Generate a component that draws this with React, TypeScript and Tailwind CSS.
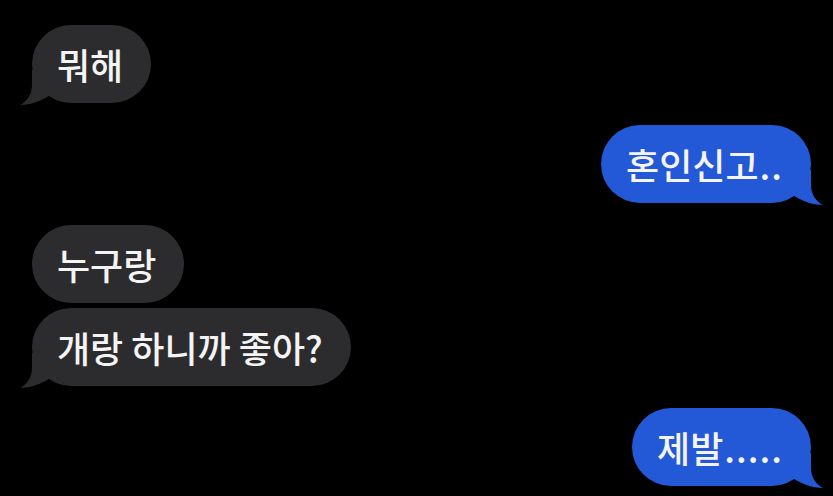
import React from 'react';

type Msg = { id: number; text: string; dots?: string; mine: boolean; tail: boolean; gap: string };

const messages: Msg[] = [
  { id: 1, text: '뭐해', mine: false, tail: true, gap: 'mt-[25px]' },
  { id: 2, text: '혼인신고', dots: '..', mine: true, tail: true, gap: 'mt-[22px]' },
  { id: 3, text: '누구랑', mine: false, tail: false, gap: 'mt-[22px]' },
  { id: 4, text: '개랑 하니까 좋아?', mine: false, tail: true, gap: 'mt-[5px]' },
  { id: 5, text: '제발', dots: '.....', mine: true, tail: true, gap: 'mt-[22px]' },
];

const Tail: React.FC<{ mine: boolean }> = ({ mine }) => (
  <svg
    width="34"
    height="37"
    viewBox="0 0 34 37"
    className={`absolute bottom-[-4px] ${mine ? 'right-[-12px] -scale-x-100' : 'left-[-12px]'}`}
  >
    <path
      d="M12,0 L12,15 C12,25 6,32 0,35 C10,35 22,31 30,25 L32,0 Z"
      className={mine ? 'fill-[#2358d6]' : 'fill-[#2c2c2e]'}
    />
  </svg>
);

const Bubble: React.FC<{ msg: Msg }> = ({ msg }) => (
  <div className={`flex ${msg.mine ? 'justify-end' : 'justify-start'} ${msg.gap}`}>
    <div
      className={`relative flex h-[78px] items-center rounded-[39px] pl-[25px] pr-[28px] text-[36px] font-medium text-[#f4f4f4] ${
        msg.mine ? 'bg-[#2358d6]' : 'bg-[#2c2c2e]'
      }`}
    >
      {msg.tail && <Tail mine={msg.mine} />}
      <span className="relative whitespace-pre">
        {msg.text}
        {msg.dots && <span className="ml-[1px] tracking-[1px]">{msg.dots}</span>}
      </span>
    </div>
  </div>
);

const App: React.FC = () => {
  return (
    <div
      className="h-[496px] w-[833px] overflow-hidden bg-black pl-[32px] pr-[22px]"
      style={{ fontFamily: '"Noto Sans CJK KR", "Noto Sans", sans-serif' }}
    >
      {messages.map(m => (
        <Bubble key={m.id} msg={m} />
      ))}
    </div>
  );
};

export default App;
